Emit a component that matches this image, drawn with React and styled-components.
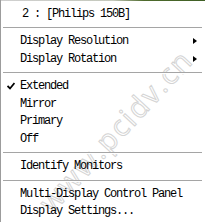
import React from 'react';
import styled, { createGlobalStyle } from 'styled-components';

const GlobalStyle = createGlobalStyle`
  html, body {
    margin: 0;
    padding: 0;
    background: #ffffff;
  }
`;

const groups = [
  [{ label: '2 : [Philips 150B]', indent: 2 }],
  [
    { label: 'Display Resolution', submenu: true },
    { label: 'Display Rotation', submenu: true },
  ],
  [
    { label: 'Extended', checked: true },
    { label: 'Mirror' },
    { label: 'Primary' },
    { label: 'Off' },
  ],
  [{ label: 'Identify Monitors' }],
  [{ label: 'Multi-Display Control Panel' }, { label: 'Display Settings...' }],
];

export default function App() {
  return (
    <>
      <GlobalStyle />
      <Menu>
        <Watermark>www.pcidv.cn</Watermark>
        <TopEdge />
        <List>
          {groups.map((group, gi) => (
            <React.Fragment key={gi}>
              {gi > 0 && <Separator />}
              {group.map((item) => (
                <Item key={item.label}>
                  <CheckSlot>
                    {item.checked && (
                      <svg width="8" height="8" viewBox="0 0 8 8">
                        <path d="M0.5 4 L3 6.5 L7.5 1" fill="none" stroke="#000" strokeWidth="1.8" />
                      </svg>
                    )}
                  </CheckSlot>
                  <Label $indent={item.indent}>{item.label}</Label>
                  {item.submenu && <Arrow />}
                </Item>
              ))}
            </React.Fragment>
          ))}
        </List>
      </Menu>
    </>
  );
}

const Menu = styled.div`
  position: relative;
  width: 205px;
  height: 222px;
  box-sizing: border-box;
  background: #ffffff;
  border-left: 1px solid #9c9c9c;
  overflow: hidden;
  display: flex;
  flex-direction: column;
`;

const TopEdge = styled.div`
  position: relative;
  height: 1px;
  background: linear-gradient(to right, #d0d0d0 0%, #c4c8bc 55%, #4e6a2c 70%, #3f5f25 100%);
`;

const List = styled.div`
  position: relative;
  display: flex;
  flex-direction: column;
  padding-top: 4px;
`;

const Item = styled.div`
  display: flex;
  align-items: center;
  height: 17.5px;
  padding-right: 8px;
`;

const CheckSlot = styled.div`
  width: 19px;
  display: flex;
  justify-content: flex-end;
  padding-right: 5px;
  box-sizing: border-box;
  align-items: center;
`;

const Label = styled.span`
  flex: 1;
  padding-left: ${({ $indent }) => ($indent || 0)}px;
  font-family: "Liberation Mono", "DejaVu Sans Mono", monospace;
  font-size: 12px;
  letter-spacing: -1.2px;
  color: #000;
  white-space: nowrap;
`;

const Arrow = styled.div`
  width: 0;
  height: 0;
  border-top: 3.5px solid transparent;
  border-bottom: 3.5px solid transparent;
  border-left: 4px solid #000;
`;

const Separator = styled.div`
  height: 10px;
  display: flex;
  align-items: center;
  padding: 0 3px 0 2px;

  &::before {
    content: '';
    flex: 1;
    height: 1px;
    background: #a5a5a5;
    box-shadow: 0 1px 0 #ffffff;
  }
`;

const Watermark = styled.div`
  position: absolute;
  left: 114px;
  top: 130px;
  transform: translate(-50%, -50%) rotate(-47deg);
  font-family: "Open Sans", "DejaVu Sans", sans-serif;
  font-size: 29px;
  letter-spacing: 2px;
  line-height: 1;
  color: transparent;
  -webkit-text-stroke: 1px #d4d4d4;
  white-space: nowrap;
  pointer-events: none;
`;
